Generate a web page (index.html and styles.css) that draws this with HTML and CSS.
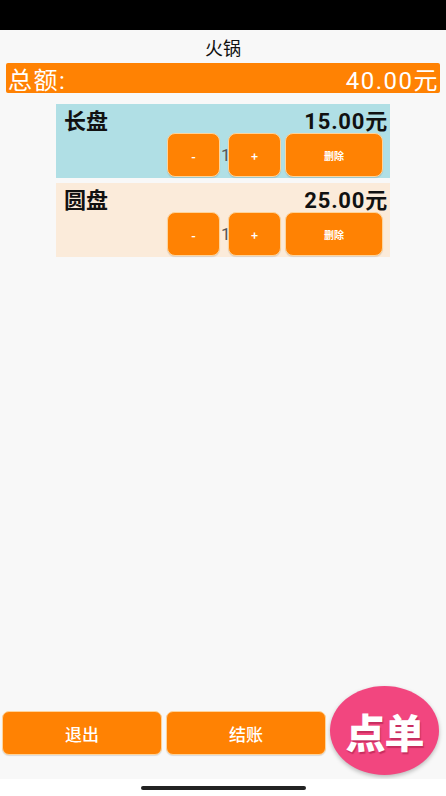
FILE: index.html
```html
<!DOCTYPE html>
<html lang="zh">
<head>
<meta charset="utf-8">
<link rel="stylesheet" href="styles.css">
</head>
<body>
<div class="app">
  <div class="statusbar"></div>
  <div class="title">火锅</div>
  <div class="total"><span>总额:</span><span>40.00元</span></div>
  <div class="list">
    <div class="card blue">
      <div class="card-head"><span class="name">长盘</span><span class="price">15.00元</span></div>
      <div class="controls">
        <button class="btn small">-</button>
        <span class="qty">1</span>
        <button class="btn small">+</button>
        <button class="btn del">删除</button>
      </div>
    </div>
    <div class="card beige">
      <div class="card-head"><span class="name">圆盘</span><span class="price">25.00元</span></div>
      <div class="controls">
        <button class="btn small">-</button>
        <span class="qty">1</span>
        <button class="btn small">+</button>
        <button class="btn del">删除</button>
      </div>
    </div>
  </div>
  <div class="spacer"></div>
  <div class="footer">
    <button class="btn big">退出</button>
    <button class="btn big">结账</button>
    <div class="order">点单</div>
  </div>
  <div class="homebar"><div class="indicator"></div></div>
</div>
</body>
</html>
```
FILE: styles.css
```css
* { box-sizing: border-box; }
html, body { margin: 0; padding: 0; }
body {
  background: #f8f8f8;
  font-family: "Roboto", "Noto Sans CJK SC", sans-serif;
}
.app {
  height: 796px;
  display: flex;
  flex-direction: column;
}
.statusbar { height: 30px; background: #000; flex: none; }
.title {
  height: 33px;
  display: flex;
  align-items: center;
  justify-content: center;
  font-size: 18px;
  color: #111;
  font-family: "Noto Sans CJK SC", sans-serif;
}
.total {
  margin: 0 6px;
  height: 30px;
  background: #ff8203;
  color: #fff;
  display: flex;
  justify-content: space-between;
  align-items: center;
  padding: 0 1px 0 2px;
  font-size: 24px;
  letter-spacing: 1.5px;
  border-radius: 2px;
}
.list {
  margin: 11px 0 0 56px;
  width: 334px;
  display: flex;
  flex-direction: column;
  gap: 5px;
}
.card {
  height: 74px;
  padding: 0 2px 0 8px;
}
.blue { background: #b0dfe5; }
.beige { background: #fbebda; }
.card-head {
  height: 29px;
  display: flex;
  justify-content: space-between;
  align-items: center;
  font-weight: 700;
  color: #111;
}
.name { font-size: 22px; font-family: "Noto Sans CJK SC", sans-serif; }
.price { font-size: 22px; letter-spacing: 0.8px; }
.controls {
  display: flex;
  justify-content: flex-end;
  align-items: center;
  padding-right: 5px;
}
.btn {
  background: #ff8203;
  color: #fff;
  border: 1px solid #ffd49a;
  border-radius: 8px;
  font-family: "Noto Sans CJK SC", sans-serif;
  padding: 0;
  box-shadow: 0 1px 1px rgba(0,0,0,0.12);
}
.small { width: 53px; height: 44px; font-size: 12px; font-weight: 700; }
.del { width: 98px; height: 44px; font-size: 10px; font-weight: 700; margin-left: 4px; }
.qty {
  width: 8px;
  font-size: 17px;
  color: #555;
  text-align: left;
  padding-left: 1px;
}
.spacer { flex: 1; }
.footer {
  display: flex;
  align-items: center;
  padding: 0 0 4px 2px;
  gap: 4px;
}
.big {
  width: 160px;
  height: 44px;
  font-size: 17px;
  font-weight: 500;
  border-radius: 7px;
  margin-top: 5px;
}
.order {
  width: 109px;
  height: 89px;
  border-radius: 50%;
  background: #f2467f;
  color: #fff;
  font-family: "Noto Sans CJK SC", sans-serif;
  font-weight: 900;
  font-size: 40px;
  display: flex;
  align-items: center;
  justify-content: center;
  text-shadow: 1px 2px 1px rgba(120,0,40,0.35);
  box-shadow: 0 2px 4px rgba(0,0,0,0.25);
  letter-spacing: -1px;
}
.homebar {
  height: 17px;
  background: #fff;
  display: flex;
  justify-content: center;
  align-items: center;
}
.indicator {
  width: 165px;
  height: 4px;
  border-radius: 2px;
  background: #222;
}
```
